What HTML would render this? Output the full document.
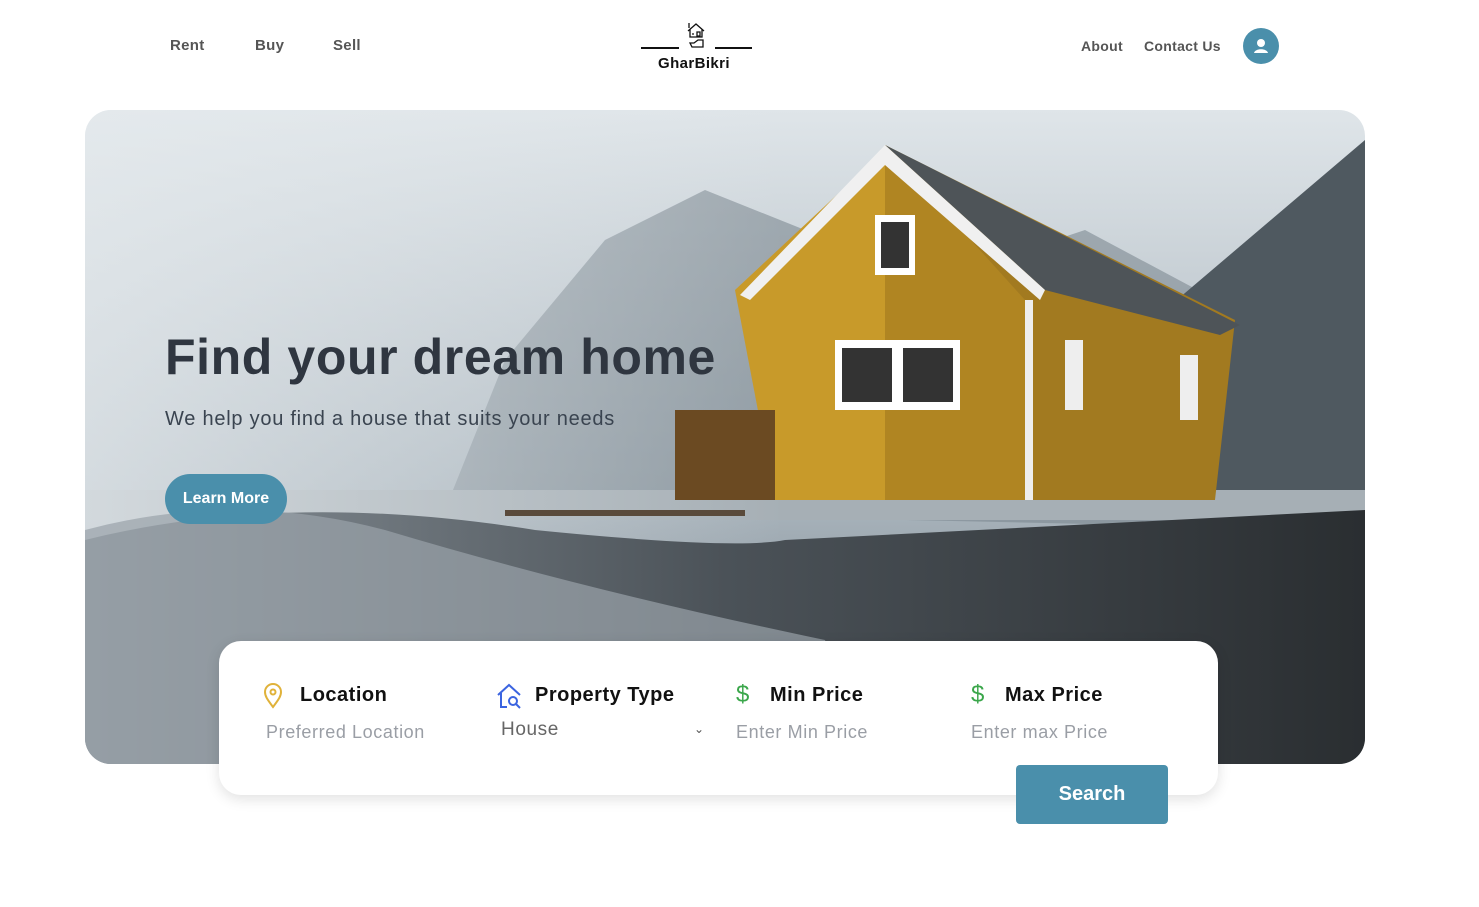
<!DOCTYPE html>
<html><head><meta charset="utf-8"><style>
*{margin:0;padding:0;box-sizing:border-box}
body{width:1479px;height:907px;background:#fff;font-family:"Liberation Sans",sans-serif;position:relative;overflow:hidden}
.nav a{position:absolute;top:37px;font-size:15px;color:#555;font-weight:bold;text-decoration:none;letter-spacing:.3px}
.hero{position:absolute;left:85px;top:110px;width:1280px;height:654px;border-radius:26px;overflow:hidden}
h1{position:absolute;left:165px;top:328px;font-size:50px;color:#2f3640;font-weight:bold;letter-spacing:0.6px}
.sub{position:absolute;left:165px;top:408px;font-size:20px;color:#3a4450;letter-spacing:.75px}
.btn{position:absolute;left:165px;top:474px;width:122px;height:50px;border-radius:25px;background:#4a8fab;color:#fff;font-size:16px;font-weight:bold;text-align:center;line-height:50px}
.card{position:absolute;left:219px;top:641px;width:999px;height:154px;background:#fff;border-radius:22px;box-shadow:0 4px 14px rgba(0,0,0,.12)}
.lab{position:absolute;top:684px;font-size:20px;font-weight:bold;color:#111;letter-spacing:.5px}
.ph{position:absolute;top:722px;font-size:18px;color:#9a9ea5;letter-spacing:.6px}
.search{position:absolute;left:1016px;top:765px;width:152px;height:59px;background:#4a8fab;border-radius:4px;color:#fff;font-size:20px;font-weight:bold;text-align:center;line-height:59px}
</style></head><body>
<div class="nav"><a style="left:170px">Rent</a><a style="left:255px">Buy</a><a style="left:333px">Sell</a>
<a style="left:1081px;top:38px;font-size:14px">About</a><a style="left:1144px;top:38px;font-size:14px">Contact Us</a></div>
<div style="position:absolute;left:641px;top:47px;width:38px;height:2px;background:#111"></div>
<div style="position:absolute;left:715px;top:47px;width:37px;height:2px;background:#111"></div>
<svg style="position:absolute;left:686px;top:21px" width="20" height="30" viewBox="0 0 20 30" fill="none" stroke="#111" stroke-width="1.3"><path d="M2 10L10 3L18 10M4 8V16H16V8M3 2V7M6 13h2M11 11v4h3v-4z"/><path d="M4 22h4l4-3h5v7H6z"/></svg>
<div style="position:absolute;left:658px;top:55px;font-size:15px;font-weight:bold;color:#111;letter-spacing:.4px">GharBikri</div>
<div style="position:absolute;left:1243px;top:28px;width:36px;height:36px;border-radius:50%;background:#4a8fab"><svg width="36" height="36"><circle cx="18" cy="15" r="4" fill="#fff"/><path d="M11 25c1-5 13-5 14 0z" fill="#fff"/></svg></div>
<div class="hero">
<svg width="1280" height="654" viewBox="0 0 1280 654">
<defs><linearGradient id="sky" x1="0" y1="0" x2="0" y2="1"><stop offset="0" stop-color="#dfe5e9"/><stop offset=".6" stop-color="#a9b4bc"/><stop offset="1" stop-color="#6c7780"/></linearGradient>
<linearGradient id="rk" x1="0" y1="0" x2="1" y2="0"><stop offset="0" stop-color="#8b949b"/><stop offset=".5" stop-color="#4b5258"/><stop offset="1" stop-color="#2a2e31"/></linearGradient>
<linearGradient id="mist" x1="0" y1="0" x2="1" y2="0"><stop offset="0" stop-color="#e6ebee" stop-opacity=".7"/><stop offset="1" stop-color="#e6ebee" stop-opacity="0"/></linearGradient></defs>
<rect width="1280" height="654" fill="url(#sky)"/>
<path d="M360 400L420 250L520 130L620 80L720 120L800 100L880 160L1000 120L1150 200L1280 30V420Z" fill="#7d8891" opacity=".6"/>
<path d="M1080 200L1280 30V450H1100Z" fill="#4f5960"/>
<rect x="0" y="380" width="1280" height="30" fill="#a6afb5"/>
<rect x="0" y="0" width="700" height="654" fill="url(#mist)"/>
<path d="M800 40L650 180L690 390H940V190Z" fill="#c89a2a"/>
<path d="M800 40L960 180L940 390L800 390Z" fill="#b08522"/>
<path d="M800 35L1150 210L1130 390H940V190Z" fill="#a27a20"/>
<path d="M800 35L840 55L1155 215L1135 225L960 180Z" fill="#4e5458"/>
<path d="M800 35L655 185L665 190L800 55L955 190L960 180Z" fill="#f0f0f0"/>
<rect x="790" y="105" width="40" height="60" fill="#fff"/><rect x="796" y="112" width="28" height="46" fill="#333"/>
<rect x="750" y="230" width="125" height="70" fill="#fff"/><rect x="757" y="238" width="50" height="54" fill="#333"/><rect x="818" y="238" width="50" height="54" fill="#333"/>
<rect x="940" y="190" width="8" height="200" fill="#eee"/>
<rect x="980" y="230" width="18" height="70" fill="#eee"/><rect x="1095" y="245" width="18" height="65" fill="#eee"/>
<rect x="590" y="300" width="100" height="90" fill="#6b4a22"/>
<path d="M0 654V430Q200 380 450 420Q650 440 700 430L1280 400V654Z" fill="url(#rk)"/>
<path d="M0 654V420Q150 380 300 420Q500 480 740 530L780 654Z" fill="#9aa3a9" opacity=".7"/>
<path d="M420 400h240v6H420z" fill="#5a4a3a"/>
</svg></div>
<h1>Find your dream home</h1>
<div class="sub">We help you find a house that suits your needs</div>
<div class="btn">Learn More</div>
<div class="card"></div>
<svg style="position:absolute;left:263px;top:683px" width="20" height="26" viewBox="0 0 20 26" fill="none" stroke="#e0b23a" stroke-width="2"><path d="M10 24C4 16 2 13 2 9a8 8 0 0116 0c0 4-2 7-8 15z"/><circle cx="10" cy="9" r="2.5"/></svg>
<div class="lab" style="left:300px">Location</div><div class="ph" style="left:266px">Preferred Location</div>
<svg style="position:absolute;left:496px;top:683px" width="28" height="26" viewBox="0 0 28 26" fill="none" stroke="#3b64e0" stroke-width="2"><path d="M2 12L13 2L24 12M5 10V24h6M17 14a4 4 0 100 8 4 4 0 000-8zM20 21l4 4"/></svg>
<div class="lab" style="left:535px">Property Type</div><div class="ph" style="left:501px;top:719px;color:#666;font-size:19px">House</div>
<div style="position:absolute;left:694px;top:722px;font-size:12px;color:#555">&#8964;</div>
<div class="lab" style="left:736px;color:#3aa64a;font-size:24px;top:681px;font-weight:normal">$</div>
<div class="lab" style="left:770px">Min Price</div><div class="ph" style="left:736px">Enter Min Price</div>
<div class="lab" style="left:971px;color:#3aa64a;font-size:24px;top:681px;font-weight:normal">$</div>
<div class="lab" style="left:1005px">Max Price</div><div class="ph" style="left:971px">Enter max Price</div>
<div class="search">Search</div>
</body></html>
